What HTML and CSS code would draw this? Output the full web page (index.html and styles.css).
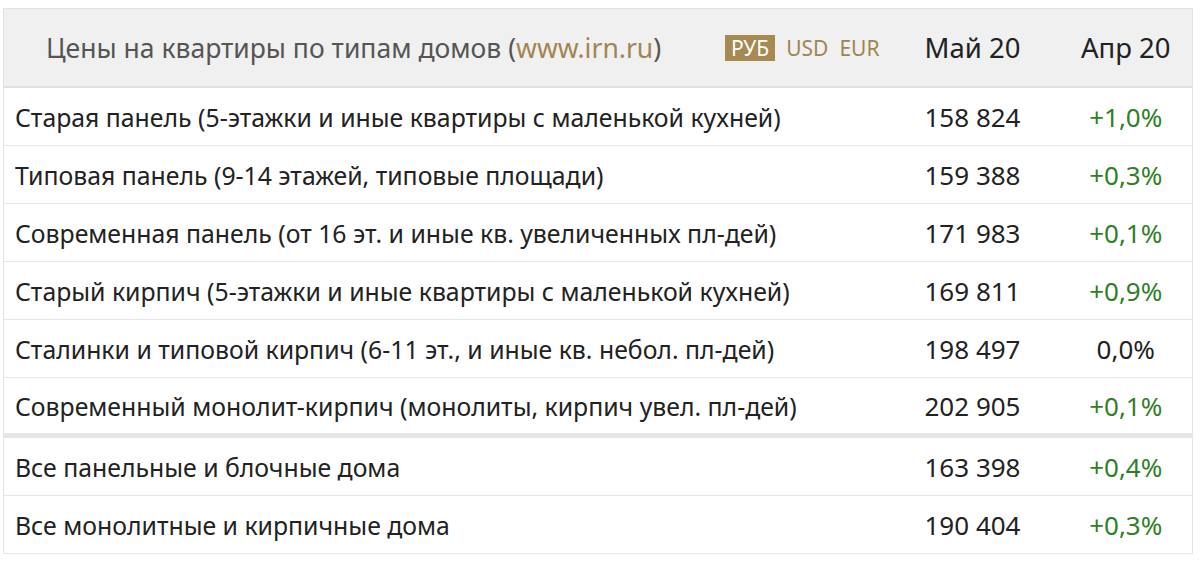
FILE: index.html
```html
<!DOCTYPE html>
<html lang="ru">
<head>
<meta charset="utf-8">
<link rel="stylesheet" href="styles.css">
</head>
<body>
<table class="prices">
  <colgroup>
    <col class="c-label">
    <col class="c-cur">
    <col class="c-prev">
  </colgroup>
  <thead>
    <tr class="head">
      <th class="title">
        <div class="title-wrap">
          <span class="title-text">Цены на квартиры по типам домов (<span class="link">www.irn.ru</span>)</span>
          <span class="currencies">
            <span class="cur active">РУБ</span>
            <span class="cur">USD</span>
            <span class="cur">EUR</span>
          </span>
        </div>
      </th>
      <th class="month">Май 20</th>
      <th class="month">Апр 20</th>
    </tr>
  </thead>
  <tbody>
    <tr><td class="label">Старая панель (5-этажки и иные квартиры с маленькой кухней)</td><td class="num">158 824</td><td class="pct up">+1,0%</td></tr>
    <tr><td class="label">Типовая панель (9-14 этажей, типовые площади)</td><td class="num">159 388</td><td class="pct up">+0,3%</td></tr>
    <tr><td class="label">Современная панель (от 16 эт. и иные кв. увеличенных пл-дей)</td><td class="num">171 983</td><td class="pct up">+0,1%</td></tr>
    <tr><td class="label">Старый кирпич (5-этажки и иные квартиры с маленькой кухней)</td><td class="num">169 811</td><td class="pct up">+0,9%</td></tr>
    <tr><td class="label">Сталинки и типовой кирпич (6-11 эт., и иные кв. небол. пл-дей)</td><td class="num">198 497</td><td class="pct">0,0%</td></tr>
    <tr class="last-group"><td class="label">Современный монолит-кирпич (монолиты, кирпич увел. пл-дей)</td><td class="num">202 905</td><td class="pct up">+0,1%</td></tr>
    <tr class="sep-row"><td class="label">Все панельные и блочные дома</td><td class="num">163 398</td><td class="pct up">+0,4%</td></tr>
    <tr><td class="label">Все монолитные и кирпичные дома</td><td class="num">190 404</td><td class="pct up">+0,3%</td></tr>
  </tbody>
</table>
</body>
</html>
```

FILE: styles.css
```css
html, body {
  margin: 0;
  padding: 0;
  background: #ffffff;
}
body {
  padding: 8px 0 0 3px;
  font-family: "Noto Sans", "Open Sans", sans-serif;
  color: #222222;
}
.prices {
  border-collapse: collapse;
  width: 1189px;
  table-layout: fixed;
  border: 1px solid #e3e3e3;
}
.c-label { width: 882px; }
.c-cur { width: 174px; }
.c-prev { width: 133px; }

.head th {
  background: #f0f0f0;
  height: 77px;
  padding: 0;
  font-weight: normal;
  border-bottom: 2px solid #e0e0e0;
}
.title-wrap {
  display: flex;
  align-items: center;
  justify-content: space-between;
  padding: 0 3px 0 42px;
}
.title-text {
  font-size: 26.5px;
  color: #555555;
}
.link { color: #a08550; }
.currencies {
  display: flex;
  align-items: center;
  gap: 5px;
  font-size: 21px;
  color: #a08550;
}
.cur { padding: 0 3px; line-height: 26px; }
.cur.active {
  background: #a68a52;
  color: #ffffff;
  padding: 0 6px;
  margin-right: 3px;
}
.month {
  font-size: 27.5px;
  color: #222222;
  text-align: center;
}
tbody td {
  height: 57px;
  padding: 0;
  border-bottom: 1px solid #e6e6e6;
  font-size: 24.8px;
}
.label { padding-left: 11px !important; }
.num { text-align: center; font-size: 26px !important; }
.pct { text-align: center; font-size: 26px !important; }
.up { color: #2f7f27; }
.last-group td { height: 55px; border-bottom: 5px solid #e6e6e6; }
```
